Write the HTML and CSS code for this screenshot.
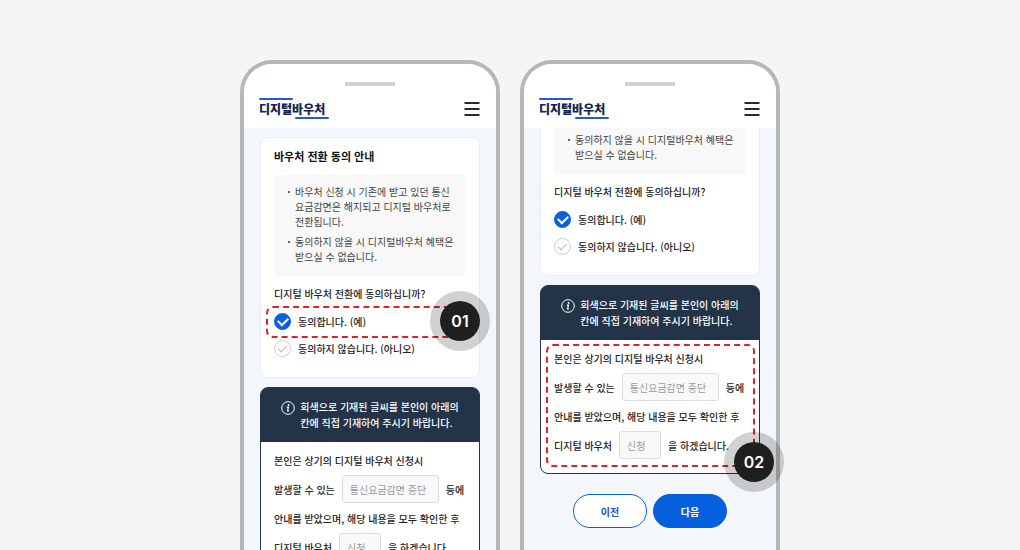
FILE: index.html
```html
<!DOCTYPE html>
<html lang="ko">
<head>
  <meta charset="UTF-8">
  <meta name="viewport" content="width=device-width, initial-scale=1.0">
  <title>디지털바우처 신청 안내</title>
  <link rel="stylesheet" href="styles.css">
</head>
<body>

  <main class="stage">

    <!-- Step 01 -->
    <section class="phone">
      <header class="phone-top">
        <span class="speaker"></span>
        <div class="bar">
          <a href="#" class="logo">디지털바우처</a>
          <button type="button" class="menu" aria-label="메뉴">
            <svg width="16" height="14" viewBox="0 0 16 14"><path d="M.5 1h15M.5 7h15M.5 13h15" stroke="#2a2a2a" stroke-width="2"/></svg>
          </button>
        </div>
      </header>

      <div class="content">
        <div class="card">
          <h2>바우처 전환 동의 안내</h2>
          <ul class="guide">
            <li>바우처 신청 시 기존에 받고 있던 통신<br>요금감면은 해지되고 디지털 바우처로<br>전환됩니다.</li>
            <li>동의하지 않을 시 디지털바우처 혜택은<br>받으실 수 없습니다.</li>
          </ul>
          <p class="question">디지털 바우처 전환에 동의하십니까?</p>
          <div class="option marked">
            <input type="radio" name="agree1" id="yes1" checked>
            <label for="yes1">동의합니다. (예)</label>
            <span class="dash dash-option"></span>
            <span class="badge badge-option">01</span>
          </div>
          <div class="option">
            <input type="radio" name="agree1" id="no1">
            <label for="no1">동의하지 않습니다. (아니오)</label>
          </div>
        </div>

        <div class="notice">
          <div class="notice-head">
            <svg width="14" height="14" viewBox="0 0 14 14"><circle cx="7" cy="7" r="6.3" fill="none" stroke="#fff" stroke-width="1"/><circle cx="7.6" cy="4" r=".9" fill="#fff"/><path d="M5.8 6.2h1.6L6.6 10h1.5" fill="none" stroke="#fff" stroke-width="1.2"/></svg>
            <p>회색으로 기재된 글씨를 본인이 아래의<br>칸에 직접 기재하여 주시기 바랍니다.</p>
          </div>
          <div class="notice-body">
            <p>본인은 상기의 디지털 바우처 신청시</p>
            <p>발생할 수 있는 <input type="text" class="long" placeholder="통신요금감면 중단" aria-label="통신요금감면 중단"> 등에</p>
            <p>안내를 받았으며, 해당 내용을 모두 확인한 후</p>
            <p>디지털 바우처 <input type="text" class="short" placeholder="신청" aria-label="신청"> 을 하겠습니다.</p>
          </div>
        </div>
      </div>
    </section>

    <!-- Step 02 -->
    <section class="phone">
      <header class="phone-top">
        <span class="speaker"></span>
        <div class="bar">
          <a href="#" class="logo">디지털바우처</a>
          <button type="button" class="menu" aria-label="메뉴">
            <svg width="16" height="14" viewBox="0 0 16 14"><path d="M.5 1h15M.5 7h15M.5 13h15" stroke="#2a2a2a" stroke-width="2"/></svg>
          </button>
        </div>
      </header>

      <div class="content scrolled">
        <div class="card">
          <ul class="guide">
            <li>동의하지 않을 시 디지털바우처 혜택은<br>받으실 수 없습니다.</li>
          </ul>
          <p class="question">디지털 바우처 전환에 동의하십니까?</p>
          <div class="option">
            <input type="radio" name="agree2" id="yes2" checked>
            <label for="yes2">동의합니다. (예)</label>
          </div>
          <div class="option">
            <input type="radio" name="agree2" id="no2">
            <label for="no2">동의하지 않습니다. (아니오)</label>
          </div>
        </div>

        <div class="notice">
          <div class="notice-head">
            <svg width="14" height="14" viewBox="0 0 14 14"><circle cx="7" cy="7" r="6.3" fill="none" stroke="#fff" stroke-width="1"/><circle cx="7.6" cy="4" r=".9" fill="#fff"/><path d="M5.8 6.2h1.6L6.6 10h1.5" fill="none" stroke="#fff" stroke-width="1.2"/></svg>
            <p>회색으로 기재된 글씨를 본인이 아래의<br>칸에 직접 기재하여 주시기 바랍니다.</p>
          </div>
          <div class="notice-body marked">
            <p>본인은 상기의 디지털 바우처 신청시</p>
            <p>발생할 수 있는 <input type="text" class="long" placeholder="통신요금감면 중단" aria-label="통신요금감면 중단"> 등에</p>
            <p>안내를 받았으며, 해당 내용을 모두 확인한 후</p>
            <p>디지털 바우처 <input type="text" class="short" placeholder="신청" aria-label="신청"> 을 하겠습니다.</p>
            <span class="dash dash-body"></span>
            <span class="badge badge-body">02</span>
          </div>
        </div>

        <div class="buttons">
          <button type="button" class="btn">이전</button>
          <button type="button" class="btn primary">다음</button>
        </div>
      </div>
    </section>

  </main>

</body>
</html>
```
FILE: styles.css
```css
* {
  box-sizing: border-box;
}

body {
  margin: 0;
  background: #f5f5f5;
  color: #222;
  font-family: "Noto Sans CJK KR", sans-serif;
  font-size: 10px;
  font-weight: 500;
  line-height: 15px;
}

h2, p, ul {
  margin: 0;
  padding: 0;
}

input, button {
  font: inherit;
  margin: 0;
}

.stage {
  display: flex;
  justify-content: center;
  gap: 20px;
  height: 100vh;
  padding-top: 60px;
  overflow: hidden;
}

/* phone frame */
.phone {
  width: 260px;
  border: 4px solid #b5b8b9;
  border-bottom: 0;
  border-radius: 32px 32px 0 0;
  background: #f3f7fb;
}

.phone-top {
  height: 64px;
  padding: 18px 16px 0 15px;
  border-radius: 28px 28px 0 0;
  background: #fff;
}

.speaker {
  display: block;
  width: 50px;
  height: 4px;
  margin: 0 auto;
  background: #d0d1d2;
}

.bar {
  display: flex;
  justify-content: space-between;
  align-items: center;
  margin-top: 12px;
}

.logo {
  position: relative;
  padding: 3px 0 2px;
  color: #12234b;
  font-size: 12px;
  font-weight: 900;
  line-height: 16px;
  text-decoration: none;
}

.logo::before,
.logo::after {
  content: "";
  position: absolute;
  width: 34px;
  height: 2px;
  border-radius: 1px;
  background: #2358d8;
}

.logo::before {
  top: 0;
  left: 0;
}

.logo::after {
  bottom: 0;
  right: -4px;
}

.menu {
  display: flex;
  padding: 0;
  border: 0;
  background: none;
}

/* page content */
.content {
  padding: 9px 16px 22px;
}

.card {
  padding: 10px 13px 15px;
  border: 1px solid #e9eef3;
  border-radius: 8px;
  background: #fff;
}

.card h2 {
  margin-bottom: 11px;
  color: #111;
  font-size: 11px;
  font-weight: 700;
  line-height: 16px;
}

.guide {
  padding: 9px 12px 12px 21px;
  border-radius: 4px;
  background: #f8f8f8;
  color: #444;
  font-weight: 400;
  list-style: none;
}

.guide li {
  position: relative;
}

.guide li::before {
  content: "";
  position: absolute;
  top: 7px;
  left: -7px;
  width: 2px;
  height: 2px;
  border-radius: 50%;
  background: #333;
}

.guide li + li {
  margin-top: 5px;
}

.question {
  margin: 10px 0 7px;
}

.option {
  display: flex;
  align-items: center;
  gap: 7px;
  height: 27px;
}

.option input {
  display: grid;
  place-items: center;
  appearance: none;
  width: 17px;
  height: 17px;
  border: 1px solid #ccc;
  border-radius: 50%;
  background: #fff;
}

.option input::after {
  content: "";
  width: 8px;
  height: 4px;
  margin-bottom: 2px;
  border: solid #bbb;
  border-width: 0 0 1px 1px;
  transform: rotate(-45deg);
}

.option input:checked {
  border-color: #0b5fe0;
  background: #0b5fe0;
}

.option input:checked::after {
  height: 5px;
  border-color: #fff;
  border-width: 0 0 2px 2px;
}

.scrolled {
  padding-top: 0;
}

.scrolled .card {
  padding-top: 0;
  border-top: 0;
  border-radius: 0 0 8px 8px;
}

.scrolled .guide {
  padding-top: 4px;
  border-radius: 0 0 4px 4px;
}

/* notice */
.notice {
  margin-top: 9px;
  border: 1px solid #233449;
  border-radius: 8px;
  background: #fff;
}

.notice-head {
  display: flex;
  justify-content: center;
  gap: 5px;
  padding: 11px 12px;
  border-radius: 6px 6px 0 0;
  background: #233449;
  color: #fff;
  line-height: 16px;
}

.notice-head svg {
  margin-top: 2px;
}

.notice-body {
  display: grid;
  gap: 1px;
  padding: 4px 13px 14px;
}

.notice-body p {
  display: flex;
  align-items: center;
  gap: 7px;
  height: 28px;
  white-space: nowrap;
}

.notice-body input {
  height: 28px;
  padding: 0 7px;
  border: 1px solid #ddd;
  border-radius: 3px;
  background: #f9f9f9;
  font-weight: 400;
}

.notice-body input::placeholder {
  color: #999;
  opacity: 1;
}

.notice-body .long {
  width: 97px;
}

.notice-body .short {
  width: 42px;
}

.buttons {
  display: flex;
  justify-content: center;
  gap: 6px;
  margin-top: 20px;
}

.btn {
  width: 74px;
  height: 34px;
  padding: 0;
  border: 1px solid #0b5fe0;
  border-radius: 17px;
  background: #fff;
  color: #1a4fd0;
  font-weight: 700;
}

.btn.primary {
  background: #0560dd;
  color: #fff;
}

/* step marks */
.marked {
  position: relative;
}

.dash {
  position: absolute;
  border: 2px dashed #e0202b;
  border-radius: 7px;
  pointer-events: none;
}

.dash-option {
  inset: -2px 6px -3px -8px;
}

.dash-body {
  inset: 4px 4px 6px 5px;
}

.badge {
  position: absolute;
  display: grid;
  place-items: center;
  width: 60px;
  height: 60px;
  border: 10px solid rgba(0, 0, 0, 0.18);
  border-radius: 50%;
  background: #1f1f1f;
  background-clip: padding-box;
  color: #fff;
  font-family: Inter, sans-serif;
  font-size: 16px;
  font-weight: 600;
}

.badge-option {
  top: -17px;
  right: -24px;
}

.badge-body {
  right: -25px;
  bottom: -19px;
}
```
